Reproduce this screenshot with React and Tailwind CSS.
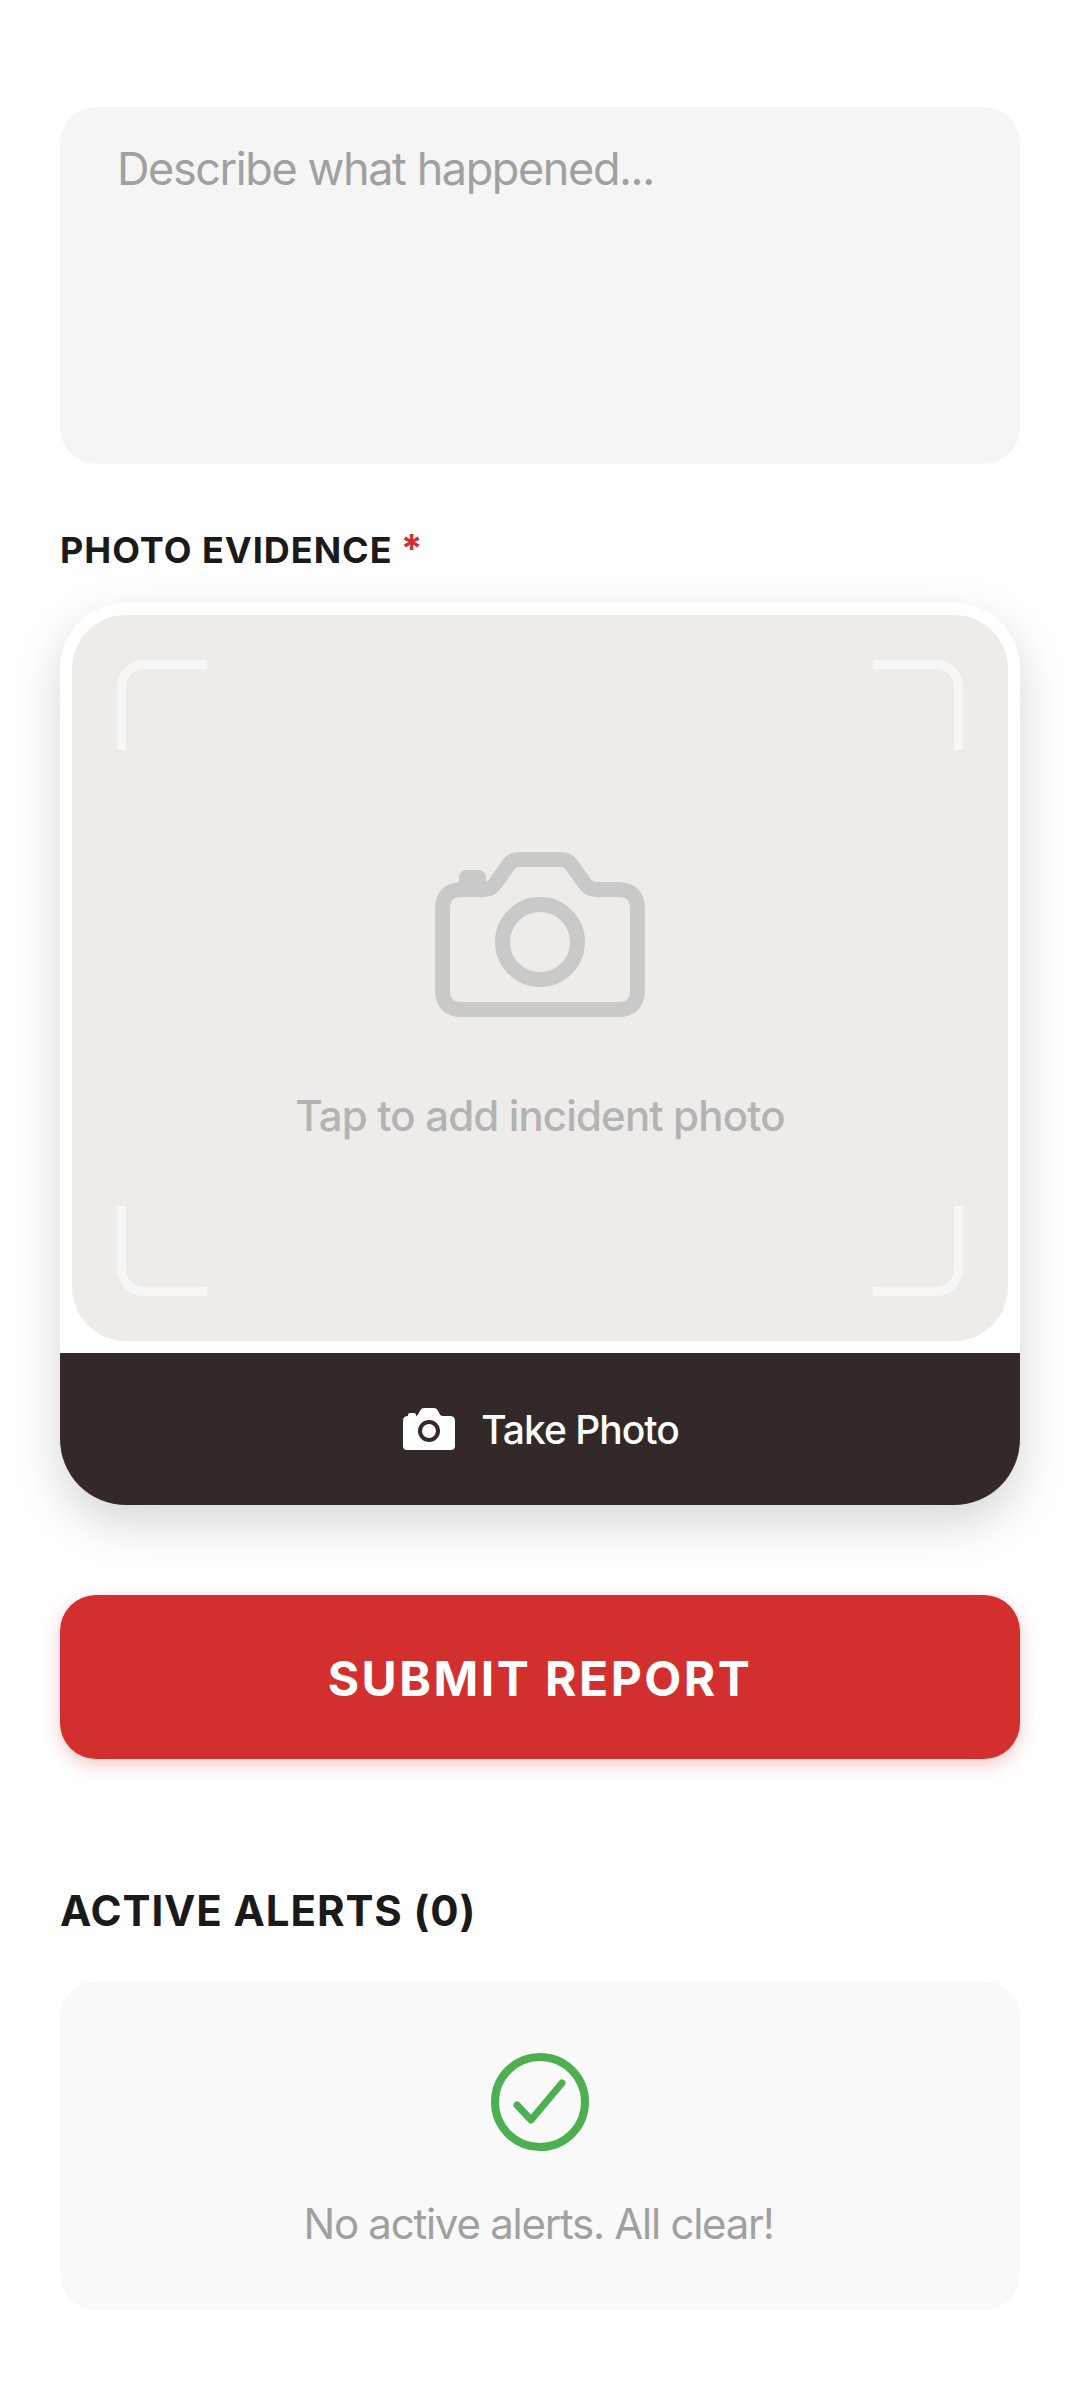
import React from "react";

const font = "font-['Inter','Noto_Sans',sans-serif]";

const Bracket = ({ className }) => (
  <div className={`absolute w-[90px] h-[90px] border-[#f8f6f4] ${className}`} />
);

const CameraOutline = () => (
  <svg width="210" height="165" viewBox="0 0 210 165" fill="none">
    <rect x="24" y="18" width="27" height="18" rx="7" fill="#c9c9c8" />
    <path
      d="M27 37.5H48Q56 37.5 60 32L74 12Q77 7.5 85 7.5H125Q133 7.5 136 12L150 32Q154 37.5 162 37.5H183Q202.5 37.5 202.5 57V138Q202.5 157.5 183 157.5H27Q7.5 157.5 7.5 138V57Q7.5 37.5 27 37.5Z"
      stroke="#c9c9c8"
      strokeWidth="15"
      strokeLinejoin="round"
    />
    <circle cx="105" cy="90" r="37.5" stroke="#c9c9c8" strokeWidth="15" />
  </svg>
);

const CameraSolid = () => (
  <svg width="52" height="42" viewBox="0 0 52 42">
    <rect x="5" y="5" width="8" height="6" rx="2" fill="#fff" />
    <path
      d="M5 8H12Q14 8 15 6.5L17.5 2Q18.5 0 21 0H31Q33.5 0 34.5 2L37 6.5Q38 8 40 8H47Q52 8 52 13V38Q52 42 48 42H4Q0 42 0 38V13Q0 8 5 8Z"
      fill="#fff"
    />
    <circle cx="26" cy="23" r="9" fill="none" stroke="#322928" strokeWidth="4" />
  </svg>
);

const App = () => {
  return (
    <div className={`w-[1080px] min-h-[2400px] bg-white px-[60px] pt-[107px] ${font}`}>
      <div className="h-[357px] rounded-[36px] bg-[#f5f5f5] px-[57px] pt-[35px] text-[45px] leading-[54px] tracking-[-1.4px] text-[#a0a0a0]">
        Describe what happened...
      </div>

      <div className="mt-[66px] h-[40px] flex items-center text-[36px] font-bold tracking-[1px] text-[#1a1a1a]">
        PHOTO EVIDENCE
        <span className="ml-[8px] mb-[4px] text-[39px] leading-none text-[#d32f2f]">*</span>
      </div>

      <div className="mt-[33px] rounded-[66px] bg-white shadow-[0_18px_48px_rgba(0,0,0,0.17)] overflow-hidden">
        <div className="p-[12px]">
          <div className="relative h-[726px] rounded-[54px] bg-[#efebe8] flex flex-col items-center pt-[237px]">
            <Bracket className="left-[45px] top-[45px] border-t-[9px] border-l-[9px] rounded-tl-[27px]" />
            <Bracket className="right-[45px] top-[45px] border-t-[9px] border-r-[9px] rounded-tr-[27px]" />
            <Bracket className="left-[45px] bottom-[45px] border-b-[9px] border-l-[9px] rounded-bl-[27px]" />
            <Bracket className="right-[45px] bottom-[45px] border-b-[9px] border-r-[9px] rounded-br-[27px]" />
            <CameraOutline />
            <div className="mt-[73px] text-[42px] leading-[52px] font-medium tracking-[-0.85px] text-[#b3b3b3]">
              Tap to add incident photo
            </div>
          </div>
        </div>
        <div className="h-[152px] bg-[#322928] pl-[2px] flex items-center justify-center gap-[26px]">
          <CameraSolid />
          <span className="mt-[2px] text-[39px] font-medium tracking-[-1px] text-white">Take Photo</span>
        </div>
      </div>

      <div className="mt-[90px] h-[164px] rounded-[36px] bg-[#d32f2f] shadow-[0_6px_18px_rgba(211,47,47,0.25)] pt-[3px] flex items-center justify-center text-[48px] font-bold tracking-[2.5px] text-white">
        SUBMIT REPORT
      </div>

      <div className="mt-[129px] h-[44px] flex items-center text-[42px] font-bold tracking-[0.9px] text-[#1a1a1a]">
        ACTIVE ALERTS (0)
      </div>

      <div className="mt-[49px] h-[329px] rounded-[36px] bg-[#f9f9f9] flex flex-col items-center pt-[72px]">
        <svg width="98" height="98" viewBox="0 0 98 98" fill="none">
          <circle cx="49" cy="49" r="45" stroke="#4caf50" strokeWidth="8" />
          <path d="M26 52L40 67L71 30" stroke="#4caf50" strokeWidth="7" strokeLinecap="round" strokeLinejoin="round" />
        </svg>
        <div className="mt-[46px] pr-[3px] text-[42px] leading-[54px] tracking-[-1.25px] text-[#a0a0a0]">
          No active alerts. All clear!
        </div>
      </div>
    </div>
  );
};

export default App;
